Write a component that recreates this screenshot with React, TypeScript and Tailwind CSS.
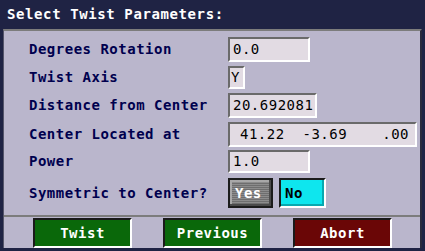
import React from "react";

const font = { fontFamily: '"DejaVu Sans Mono", "Liberation Mono", monospace' };

function Field({ value, w, pad = "pl-[3px]" }: { value: string; w: string; pad?: string }) {
  return (
    <div
      className={`${w} h-full ${pad} shrink-0 flex items-center bg-[#e2dbe3] border-2 border-t-[#6a6a6a] border-l-[#6a6a6a] border-b-white border-r-white text-black text-[14px] tracking-[0.5px]`}
    >
      {value}
    </div>
  );
}

function BigButton({ label, color }: { label: string; color: string }) {
  return (
    <button
      className={`w-[99px] h-[30px] ${color} border-2 border-t-[#1a1a1a] border-l-[#1a1a1a] border-b-white border-r-white text-white font-bold text-[14px] tracking-[0.5px] flex items-center justify-center`}
    >
      {label}
    </button>
  );
}

export default function App() {
  const labelCls = "w-[224px] shrink-0 whitespace-nowrap pl-[25px] text-[#00004e] font-bold text-[14px] tracking-[0.5px]";

  return (
    <div className="w-[425px] h-[251px] bg-[#1f2344] overflow-hidden" style={font}>
      <div className="h-[29px] flex items-center pl-[7px] text-white font-bold text-[14px] tracking-[0.6px]">
        Select Twist Parameters:
      </div>
      <div className="ml-[3px] w-[419px] h-[219px] bg-[#bab6cc] border-t-2 border-t-[#7c7c7c] border-l border-l-[#55556a] border-r-2 border-r-[#2a2a3c] flex flex-col">
        <div className="mt-[6px] h-[25px] flex items-center">
          <div className={labelCls}>Degrees Rotation</div>
          <Field value="0.0" w="w-[82px]" />
        </div>
        <div className="mt-[4px] h-[23px] flex items-center">
          <div className={labelCls}>Twist Axis</div>
          <Field value="Y" w="w-[17px]" pad="pl-[1px]" />
        </div>
        <div className="mt-[4px] h-[25px] flex items-center">
          <div className={labelCls}>Distance from Center</div>
          <Field value="20.692081" w="w-[89px]" />
        </div>
        <div className="mt-[4px] h-[25px] flex items-center">
          <div className={labelCls}>Center Located at</div>
          <div className="w-[189px] h-full shrink-0 pl-[10px] pr-[6px] flex items-center justify-between bg-[#e2dbe3] border-2 border-t-[#6a6a6a] border-l-[#6a6a6a] border-b-white border-r-white text-black text-[14px] tracking-[0.5px]">
            <span className="whitespace-pre">41.22  -3.69</span>
            <span>.00</span>
          </div>
        </div>
        <div className="mt-[3px] h-[23px] flex items-center">
          <div className={labelCls}>Power</div>
          <Field value="1.0" w="w-[82px]" />
        </div>
        <div className="mt-[5px] h-[30px] flex items-center">
          <div className={labelCls}>Symmetric to Center?</div>
          <div className="flex gap-[6px] h-full">
            <button className="w-[45px] h-full border-2 border-[#1c1c1c] bg-[repeating-linear-gradient(0deg,#6e6e6e_0px,#6e6e6e_1px,#8c8c8c_1px,#8c8c8c_2px)] text-white font-bold text-[14px] tracking-[0.5px] flex items-center pl-[5px] shadow-[inset_-2px_-2px_0_#4a4a4a,inset_2px_2px_0_#a8a8a8]">
              Yes
            </button>
            <button className="w-[47px] h-full border-2 border-t-[#1c1c1c] border-l-[#1c1c1c] border-b-white border-r-white bg-[#0ee6ee] text-black font-bold text-[14px] tracking-[0.5px] flex items-center pl-[4px] shadow-[inset_-2px_-2px_0_#08a8b0]">
              No
            </button>
          </div>
        </div>
        <div className="mt-[7px] h-[2px] bg-[#7c7c7c]" />
        <div className="mt-px pl-[29px] flex gap-[31px]">
          <BigButton label="Twist" color="bg-[#0a680a]" />
          <BigButton label="Previous" color="bg-[#0a680a]" />
          <BigButton label="Abort" color="bg-[#6a0606]" />
        </div>
      </div>
    </div>
  );
}
